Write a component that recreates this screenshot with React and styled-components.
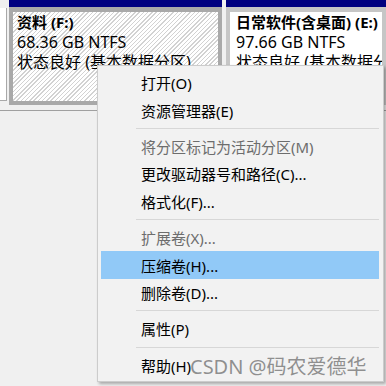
import React from 'react';
import styled, { createGlobalStyle } from 'styled-components';

const GlobalStyle = createGlobalStyle`
  html, body {
    margin: 0;
    padding: 0;
    background: #f0f0f0;
  }
  body {
    font-family: "Noto Sans", "Noto Sans CJK SC", sans-serif;
  }
`;

const Screen = styled.div`
  position: relative;
  width: 386px;
  height: 386px;
  overflow: hidden;
  background: #f0f0f0;
`;

const DiskRow = styled.div`
  display: flex;
  gap: 2px;
  height: 105px;
`;

const Stub = styled.div`
  width: 6px;
  background: #fff;
  border-right: 1px solid #a8a8a8;
  border-bottom: 1px solid #a8a8a8;
  margin-top: 8px;
  margin-bottom: 4px;
`;

const Partition = styled.div`
  display: flex;
  flex-direction: column;
  width: ${(p) => p.width}px;
  flex-shrink: 0;
  margin-right: ${(p) => p.gap || 0}px;
`;

const PartitionHeader = styled.div`
  height: 7px;
  background: #000080;
`;

const PartitionBody = styled.div`
  flex: 1;
  border: 4px solid ${(p) => (p.selected ? '#a9a9a9' : '#c6c6c6')};
  border-top-width: 5px;
  padding: 0 ${(p) => p.pad}px;
  overflow: hidden;
  white-space: nowrap;
  background: ${(p) =>
    p.selected
      ? 'repeating-linear-gradient(135deg, #ffffff 0 2px, #d2d2d2 2px 3px)'
      : '#ffffff'};
`;

const Line = styled.div`
  font-size: ${(p) => (p.bold ? 15 : 16)}px;
  line-height: 20px;
  color: #000;
  font-weight: ${(p) => (p.bold ? 700 : 400)};
`;

const Divider = styled.div`
  margin-top: 5px;
  height: 1px;
  background: #a0a0a0;
`;

const Menu = styled.div`
  position: absolute;
  left: 97px;
  top: 65px;
  width: 285px;
  padding: 3px 0 2px;
  background: #f2f2f2;
  border: 1px solid #cccccc;
  box-shadow: 2px 2px 3px rgba(0, 0, 0, 0.3);
`;

const Item = styled.div`
  height: 27.4px;
  margin: 0 4px 0 3px;
  padding-left: 40px;
  display: flex;
  align-items: center;
  font-size: 15px;
  color: ${(p) => (p.disabled ? '#6d6d6d' : '#000')};
  background: ${(p) => (p.active ? '#91c9f7' : 'transparent')};
  white-space: nowrap;
`;

const Separator = styled.div`
  height: 9px;
  margin: 0 4px 0 38px;
  display: flex;
  align-items: center;

  &::after {
    content: '';
    flex: 1;
    height: 1px;
    background: #d7d7d7;
  }
`;

const Watermark = styled.div`
  position: absolute;
  left: 190px;
  top: 353px;
  font-size: 20px;
  line-height: 28px;
  color: rgba(110, 110, 110, 0.75);
  white-space: nowrap;
  pointer-events: none;
`;

const menu = [
  { label: '打开(O)' },
  { label: '资源管理器(E)' },
  { sep: true },
  { label: '将分区标记为活动分区(M)', disabled: true },
  { label: '更改驱动器号和路径(C)...' },
  { label: '格式化(F)...' },
  { sep: true },
  { label: '扩展卷(X)...', disabled: true },
  { label: '压缩卷(H)...', active: true },
  { label: '删除卷(D)...' },
  { sep: true },
  { label: '属性(P)' },
  { sep: true },
  { label: '帮助(H)' },
];

const App = () => {
  return (
    <Screen>
      <GlobalStyle />
      <DiskRow>
        <Stub />
        <Partition width={213} gap={2}>
          <PartitionHeader />
          <PartitionBody selected pad={4}>
            <Line bold>资料 (F:)</Line>
            <Line>68.36 GB NTFS</Line>
            <Line>状态良好 (基本数据分区)</Line>
          </PartitionBody>
        </Partition>
        <Partition width={160}>
          <PartitionHeader />
          <PartitionBody pad={6}>
            <Line bold>日常软件(含桌面) (E:)</Line>
            <Line>97.66 GB NTFS</Line>
            <Line>状态良好 (基本数据分区)</Line>
          </PartitionBody>
        </Partition>
      </DiskRow>
      <Divider />
      <Menu>
        {menu.map((m, i) =>
          m.sep ? (
            <Separator key={i} />
          ) : (
            <Item key={i} disabled={m.disabled} active={m.active}>
              {m.label}
            </Item>
          )
        )}
      </Menu>
      <Watermark>CSDN @码农爱德华</Watermark>
    </Screen>
  );
};

export default App;
